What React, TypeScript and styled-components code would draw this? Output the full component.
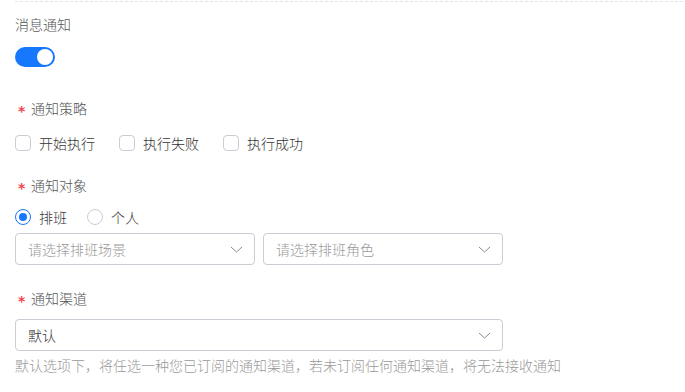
import React, { useState } from "react";
import styled, { createGlobalStyle } from "styled-components";

const GlobalStyle = createGlobalStyle`
  html, body {
    margin: 0;
    padding: 0;
    background: #fff;
  }
  body {
    font-family: "Noto Sans CJK SC", "Noto Sans", sans-serif;
    font-size: 14px;
    font-weight: 300;
    color: #333;
  }
`;

const Page = styled.div`
  width: 685px;
  height: 392px;
  box-sizing: border-box;
  padding: 0 2px 0 15px;
  display: flex;
  flex-direction: column;
  overflow: hidden;
`;

const Divider = styled.div`
  margin-top: 1px;
  border-top: 1px dashed #e3e3e3;
`;

const FormItem = styled.div<{ $top: number }>`
  margin-top: ${(p) => p.$top}px;
  display: flex;
  flex-direction: column;
`;

const Label = styled.div<{ $gap: number }>`
  height: 22px;
  line-height: 22px;
  color: #555;
  font-size: 14px;
  margin-bottom: ${(p) => p.$gap}px;
  display: flex;
  align-items: center;
`;

const Star = styled.span`
  color: #f5444d;
  font-size: 14px;
  font-weight: 700;
  width: 16px;
  padding-left: 3px;
  box-sizing: border-box;
  font-family: "DejaVu Sans", sans-serif;
  transform: translateY(3px);
`;

const Switch = styled.button<{ $on: boolean }>`
  width: 40px;
  height: 20px;
  border: none;
  padding: 2px;
  border-radius: 10px;
  background: ${(p) => (p.$on ? "#1677ff" : "#c9cdd4")};
  display: flex;
  justify-content: ${(p) => (p.$on ? "flex-end" : "flex-start")};
  cursor: pointer;
`;

const Knob = styled.span`
  width: 16px;
  height: 16px;
  border-radius: 50%;
  background: #fff;
`;

const OptionRow = styled.div<{ $gap: number }>`
  display: flex;
  align-items: center;
  height: 24px;
  gap: ${(p) => p.$gap}px;
`;

const Option = styled.label`
  display: flex;
  align-items: center;
  gap: 8px;
  color: #333;
  cursor: pointer;
  line-height: 22px;
`;

const Box = styled.span`
  width: 16px;
  height: 16px;
  box-sizing: border-box;
  border: 1px solid #c9cdd4;
  border-radius: 4px;
  background: #fff;
`;

const Radio = styled.span<{ $checked: boolean }>`
  width: 16px;
  height: 16px;
  box-sizing: border-box;
  border-radius: 50%;
  border: 1px solid ${(p) => (p.$checked ? "#1677ff" : "#c9cdd4")};
  display: flex;
  align-items: center;
  justify-content: center;
  &::after {
    content: "";
    width: 8px;
    height: 8px;
    border-radius: 50%;
    background: ${(p) => (p.$checked ? "#1677ff" : "transparent")};
  }
`;

const SelectRow = styled.div`
  display: flex;
  gap: 8px;
  margin-top: 4px;
`;

const Select = styled.div<{ $width: number; $filled?: boolean }>`
  width: ${(p) => p.$width}px;
  height: 32px;
  box-sizing: border-box;
  border: 1px solid #c9cdd4;
  border-radius: 4px;
  padding: 0 11px 0 12px;
  display: flex;
  align-items: center;
  justify-content: space-between;
  color: ${(p) => (p.$filled ? "#333" : "#999")};
`;

const Help = styled.div`
  margin-top: 3px;
  line-height: 22px;
  color: #999;
`;

const Chevron = () => (
  <svg width="13" height="12" viewBox="0 0 13 12" fill="none">
    <path d="M1 4l5.5 5L12 4" stroke="#8a8a8a" strokeWidth="1" />
  </svg>
);

export default function App() {
  const [on, setOn] = useState(true);
  const [target, setTarget] = useState("排班");

  return (
    <>
      <GlobalStyle />
      <Page>
        <Divider />
        <FormItem $top={11}>
          <Label $gap={12}>消息通知</Label>
          <Switch $on={on} onClick={() => setOn(!on)}>
            <Knob />
          </Switch>
        </FormItem>

        <FormItem $top={30}>
          <Label $gap={12}>
            <Star>*</Star>通知策略
          </Label>
          <OptionRow $gap={24}>
            {["开始执行", "执行失败", "执行成功"].map((t) => (
              <Option key={t}>
                <Box />
                {t}
              </Option>
            ))}
          </OptionRow>
        </FormItem>

        <FormItem $top={19}>
          <Label $gap={9}>
            <Star>*</Star>通知对象
          </Label>
          <OptionRow $gap={20}>
            {["排班", "个人"].map((t) => (
              <Option key={t} onClick={() => setTarget(t)}>
                <Radio $checked={target === t} />
                {t}
              </Option>
            ))}
          </OptionRow>
          <SelectRow>
            <Select $width={240}>
              请选择排班场景
              <Chevron />
            </Select>
            <Select $width={240}>
              请选择排班角色
              <Chevron />
            </Select>
          </SelectRow>
        </FormItem>

        <FormItem $top={22}>
          <Label $gap={10}>
            <Star>*</Star>通知渠道
          </Label>
          <Select $width={488} $filled>
            默认
            <Chevron />
          </Select>
          <Help>默认选项下，将任选一种您已订阅的通知渠道，若未订阅任何通知渠道，将无法接收通知</Help>
        </FormItem>
      </Page>
    </>
  );
}
